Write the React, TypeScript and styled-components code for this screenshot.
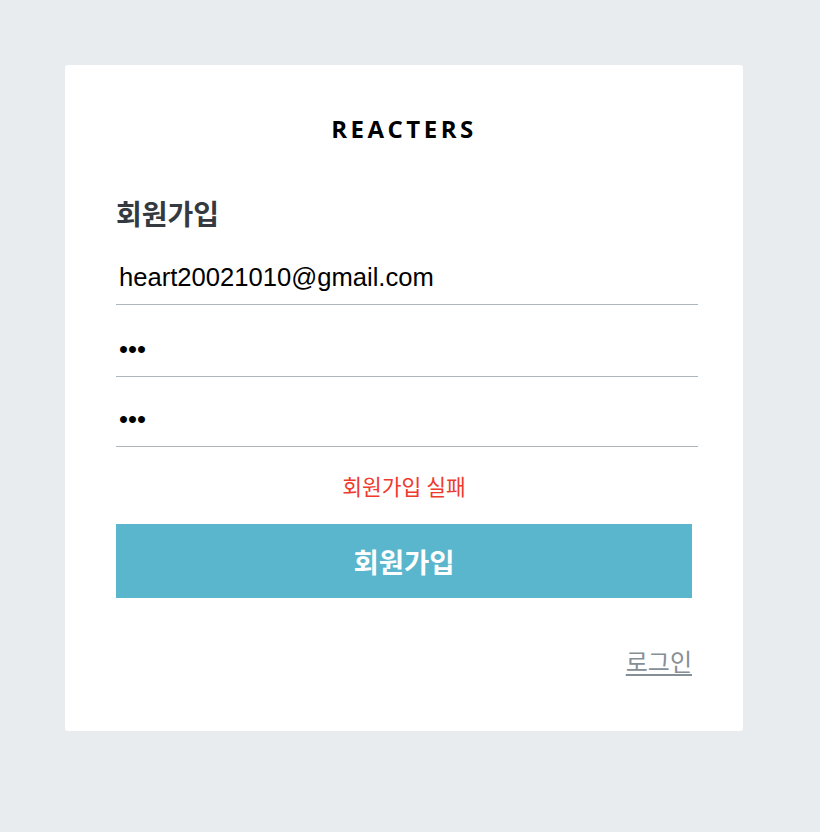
import React from 'react';
import styled, { createGlobalStyle } from 'styled-components';

const GlobalStyle = createGlobalStyle`
  html, body {
    margin: 0;
    padding: 0;
    background: #e9ecef;
  }
  body {
    font-family: 'Noto Sans CJK KR', 'Noto Sans', sans-serif;
  }
  * {
    box-sizing: border-box;
  }
`;

const Page = styled.div`
  min-height: 832px;
  padding: 65px 0 0 65px;
  display: flex;
  align-items: flex-start;
`;

const Card = styled.div`
  width: 678px;
  background: #fff;
  border-radius: 3px;
  padding: 47px 51px 53px;
  display: flex;
  flex-direction: column;
`;

const Logo = styled.div`
  font-family: 'Open Sans', 'Noto Sans', sans-serif;
  font-weight: 700;
  font-size: 24px;
  line-height: 33px;
  letter-spacing: 3.5px;
  text-align: center;
  color: #000;
`;

const Title = styled.h3`
  margin: 48px 0 0;
  font-size: 28px;
  line-height: 40px;
  font-weight: 700;
  color: #343a40;
`;

const Form = styled.form`
  display: flex;
  flex-direction: column;
`;

const Input = styled.input<{ $gap: number }>`
  width: calc(100% + 6px);
  height: 55px;
  margin-top: ${(p) => p.$gap}px;
  padding: 0 3px;
  border: none;
  border-bottom: 1px solid #adb5bd;
  outline: none;
  font-family: 'Liberation Sans', Arial, sans-serif;
  font-size: 25.6px;
  color: #000;
  background: transparent;
`;

const ErrorMessage = styled.div`
  margin-top: 24px;
  text-align: center;
  color: #ee3b2d;
  font-size: 21.5px;
  line-height: 30px;
`;

const SubmitButton = styled.button`
  margin-top: 23px;
  height: 74px;
  width: 100%;
  border: none;
  background: #59b6cc;
  color: #fff;
  font-family: 'Noto Sans CJK KR', sans-serif;
  font-size: 27.5px;
  font-weight: 700;
  cursor: pointer;
`;

const Footer = styled.div`
  margin-top: 46px;
  display: flex;
  justify-content: flex-end;
`;

const LoginLink = styled.a`
  font-size: 24px;
  line-height: 34px;
  color: #868e96;
  text-decoration: underline;
  text-underline-offset: 3px;
`;

export default function App() {
  return (
    <>
      <GlobalStyle />
      <Page>
        <Card>
          <Logo>REACTERS</Logo>
          <Title>회원가입</Title>
          <Form onSubmit={(e) => e.preventDefault()}>
            <Input $gap={17} type="email" defaultValue="heart20021010@gmail.com" />
            <Input $gap={17} type="password" defaultValue="abc" />
            <Input $gap={15} type="password" defaultValue="abc" />
            <ErrorMessage>회원가입 실패</ErrorMessage>
            <SubmitButton type="submit">회원가입</SubmitButton>
          </Form>
          <Footer>
            <LoginLink href="#login">로그인</LoginLink>
          </Footer>
        </Card>
      </Page>
    </>
  );
}
